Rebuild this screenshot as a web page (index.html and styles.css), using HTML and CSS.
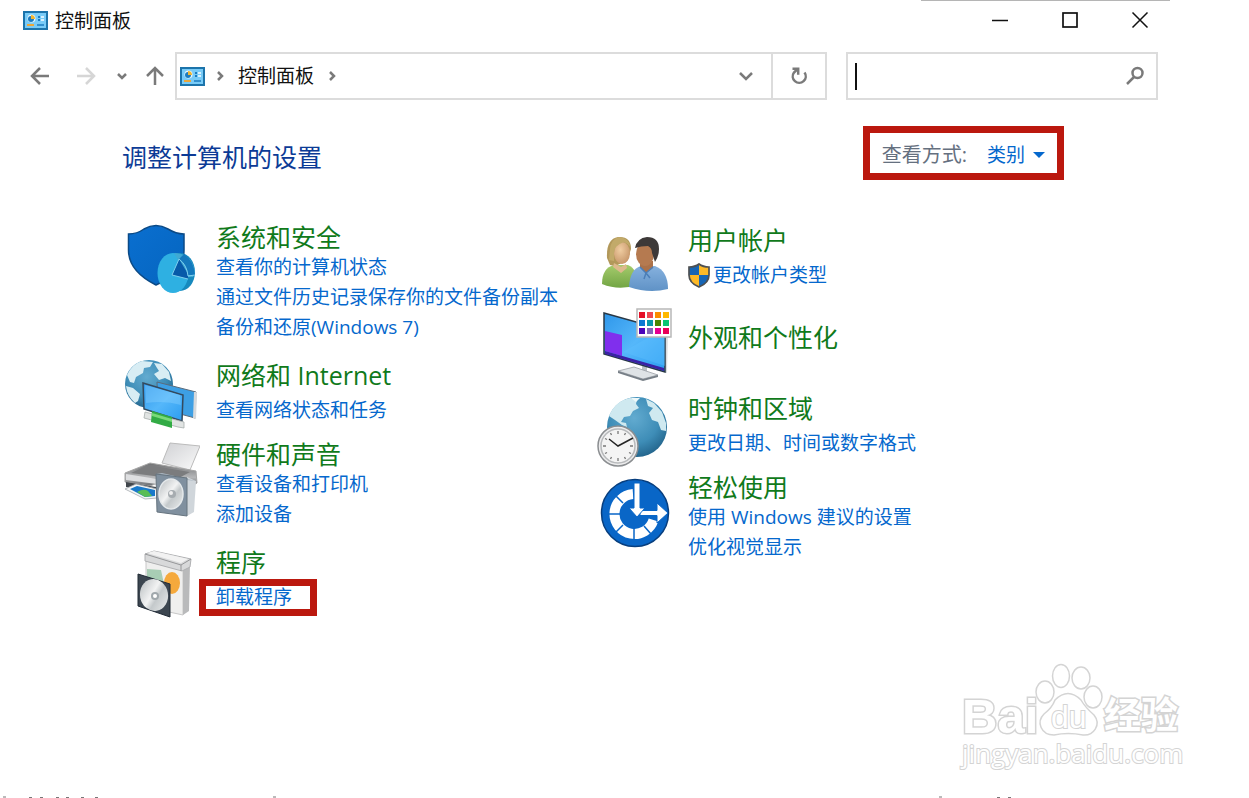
FILE: index.html
```html
<!DOCTYPE html>
<html lang="zh-CN">
<head>
    <meta charset="UTF-8">
    <meta name="viewport" content="width=device-width, initial-scale=1.0">
    <title>控制面板</title>
    <link rel="stylesheet" href="styles.css">
</head>
<body>
    <svg class="defs" width="0" height="0" aria-hidden="true">
        <defs>
            <linearGradient id="gBlue" x1="0" y1="0" x2="1" y2="1"><stop offset="0" stop-color="#0a6fd0"/><stop offset="1" stop-color="#0565bf"/></linearGradient>
            <linearGradient id="gScreen" x1="0" y1="0" x2="1" y2="1"><stop offset="0" stop-color="#2e96ea"/><stop offset="0.5" stop-color="#55b7fa"/><stop offset="1" stop-color="#2b9cf0"/></linearGradient>
            <linearGradient id="gPaper" x1="0" y1="0" x2="1" y2="1"><stop offset="0" stop-color="#d0d1d4"/><stop offset="1" stop-color="#fafafa"/></linearGradient>
            <linearGradient id="gPrinter" x1="0" y1="0" x2="0" y2="1"><stop offset="0" stop-color="#6f7072"/><stop offset="0.6" stop-color="#b6b7b9"/><stop offset="1" stop-color="#5d6064"/></linearGradient>
            <linearGradient id="gDisc" x1="0" y1="0" x2="1" y2="1"><stop offset="0" stop-color="#b5babd"/><stop offset="0.45" stop-color="#f2f3f3"/><stop offset="0.6" stop-color="#c4c9cb"/><stop offset="1" stop-color="#eceeee"/></linearGradient>
            <radialGradient id="gGlobe" cx="0.45" cy="0.35" r="0.7"><stop offset="0" stop-color="#62abd0"/><stop offset="0.6" stop-color="#3e8db7"/><stop offset="1" stop-color="#1f5f86"/></radialGradient>
            <radialGradient id="gFace" cx="0.4" cy="0.35" r="0.8"><stop offset="0" stop-color="#f0cda2"/><stop offset="1" stop-color="#c08d60"/></radialGradient>
            <linearGradient id="gGreen" x1="0" y1="0" x2="0" y2="1"><stop offset="0" stop-color="#a5cb6c"/><stop offset="1" stop-color="#72a544"/></linearGradient>
            <linearGradient id="gShirt" x1="0" y1="0" x2="0" y2="1"><stop offset="0" stop-color="#86b1de"/><stop offset="1" stop-color="#5f92c6"/></linearGradient>
            <symbol id="panel" viewBox="0 0 25 19">
                <rect x="1" y="1" width="23" height="17" fill="#78cbf7" stroke="#1c74ab" stroke-width="2"/>
                <circle cx="8.500" cy="7.500" r="4" fill="#e8f6fd"/>
                <circle cx="8" cy="8" r="3" fill="#1c7cc0"/>
                <path d="M8 8V4a4 4 0 0 1 4 4z" fill="#f2b632"/>
                <path d="M15 5h2v2h-2zM15 8h2v2h-2z" fill="#1c7cc0"/>
                <path d="M18 5h3v2h-3zM18 8h3v2h-3z" fill="#d9f1fd"/>
                <path d="M4 14h7" stroke="#eaa73b" stroke-width="2"/>
                <path d="M14 14h7" stroke="#1c7cc0" stroke-width="1.500"/>
            </symbol>
        </defs>
    </svg>

    <div class="window">
        <header class="titlebar">
            <svg class="panel-icon" aria-hidden="true"><use href="#panel"/></svg>
            <span class="title">控制面板</span>
            <div class="window-buttons">
                <button aria-label="最小化"><svg width="18" height="18"><path d="M1 9.500h16" stroke="#111" stroke-width="1.500"/></svg></button>
                <button aria-label="最大化"><svg width="18" height="18"><rect x="2" y="2" width="14" height="14" fill="none" stroke="#111" stroke-width="1.700"/></svg></button>
                <button aria-label="关闭"><svg width="18" height="18"><path d="M1.500 1.500l15 15M16.500 1.500l-15 15" stroke="#111" stroke-width="1.500"/></svg></button>
            </div>
        </header>

        <div class="toolbar">
            <nav class="nav-buttons">
                <button class="nav-wide" aria-label="后退"><svg width="20" height="18" class="stroke"><path d="M19 9H2M10 1L2 9l8 8"/></svg></button>
                <button class="nav-wide nav-off" aria-label="前进"><svg width="20" height="18" class="stroke"><path d="M1 9h17M10 1l8 8-8 8"/></svg></button>
                <button class="nav-small" aria-label="最近位置"><svg width="10" height="8" class="stroke"><path d="M1 2l4 4 4-4"/></svg></button>
                <button class="nav-up" aria-label="上移"><svg width="18" height="20" class="stroke"><path d="M9 19V2M1 10l8-8 8 8"/></svg></button>
            </nav>
            <div class="address">
                <svg class="panel-icon" aria-hidden="true"><use href="#panel"/></svg>
                <svg width="8" height="10" class="stroke crumb-arrow"><path d="M2 1l4 4-4 4"/></svg>
                <a class="crumb" href="#">控制面板</a>
                <svg width="8" height="10" class="stroke crumb-arrow"><path d="M2 1l4 4-4 4"/></svg>
                <button class="address-drop" aria-label="以前的位置"><svg width="16" height="10" class="stroke"><path d="M2 2l6 6 6-6"/></svg></button>
                <button class="refresh" aria-label="刷新"><svg width="18" height="18" class="stroke"><path d="M14.500 5.500a6.500 6.500 0 1 1-10.500 0l3-3M2.500 1.800h5.700v6"/></svg></button>
            </div>
            <div class="search">
                <span class="caret"></span>
                <input type="text" aria-label="搜索控制面板">
                <button aria-label="搜索"><svg width="20" height="20" class="stroke"><circle cx="12.500" cy="7" r="5"/><path d="M9 11l-7 7"/></svg></button>
            </div>
        </div>

        <main class="content">
            <div class="content-head">
                <h1>调整计算机的设置</h1>
                <div class="view-mode">
                    <label for="view">查看方式:</label>
                    <select id="view">
                        <option>类别</option>
                    </select>
                </div>
            </div>

            <div class="columns">
                <div class="column">
                    <section class="category">
                        <svg class="icon" viewBox="0 0 80 80" aria-hidden="true">
                            <path d="M8.500 12Q17 12 24 7 36 0 48 7 56 12 64 12V28C64 46 52 56 36 63 18 54 8.500 42 8.500 28z" fill="url(#gBlue)" stroke="#0b4a86" stroke-width="1.500"/>
                            <ellipse cx="60" cy="50" rx="15" ry="19" fill="#1689bd"/>
                            <ellipse cx="53" cy="51" rx="15.500" ry="20" fill="#2eb0e2"/>
                            <path d="M54 31q18 0 21 19l-2 5-5 0z" fill="#3fa9d3"/>
                            <path d="M59 37L52 53l16 4V52z" fill="#075aa9"/>
                            <path d="M59 37q8 6 9 16h7q-1-14-11-21z" fill="#1479bd"/>
                            <path d="M59 37L52 53l16 4M59 37q8 6 9 17l7-1" fill="none" stroke="#7fd0ee"/>
                        </svg>
                        <div class="category-body">
                            <h2><a href="#">系统和安全</a></h2>
                            <ul>
                                <li><a href="#">查看你的计算机状态</a></li>
                                <li><a href="#">通过文件历史记录保存你的文件备份副本</a></li>
                                <li><a href="#">备份和还原(Windows 7)</a></li>
                            </ul>
                        </div>
                    </section>

                    <section class="category single">
                        <svg class="icon" viewBox="0 0 80 80" aria-hidden="true">
                            <circle cx="29" cy="24" r="24" fill="url(#gGlobe)"/>
                            <path d="M7 15q5-11 15-14l11 1-3 5-6 1-1 5-7 4-2 6-4-1zM6 26l7 2 7 6-2 7-3 2Q7 36 6 26zM34 3l8 1 7 8 2 9-6-3-6 2-5-6 5-3-2-3z" fill="#d8edf4"/>
                            <path d="M37 22l39 10-1 26-37-10z" fill="#3d9fe4" stroke="#5b6b7b"/>
                            <path d="M76 32l1 1-1 26-3-1 1-26z" fill="#d5d9dc"/>
                            <path d="M23 23l40 12-1 26-38-12z" fill="url(#gScreen)" stroke="#34495d" stroke-width="1.500"/>
                            <path d="M26 43Q45 40 61 45l-1-10-35-10z" fill="#8bd2ff" opacity=".4"/>
                            <path d="M25 52l39 10v6l-6-1-34-9z" fill="#e1e4e3" stroke="#a7adac" stroke-width=".8"/>
                            <path d="M32 51l20 6v11l-21-6z" fill="#32ab45"/>
                            <path d="M32 53l20 6v3l-20-6z" fill="#79da79"/>
                        </svg>
                        <div class="category-body">
                            <h2><a href="#">网络和 Internet</a></h2>
                            <ul>
                                <li><a href="#">查看网络状态和任务</a></li>
                            </ul>
                        </div>
                    </section>

                    <section class="category">
                        <svg class="icon" viewBox="0 0 80 80" aria-hidden="true">
                            <path d="M50 4l30 3-10 24-28-7z" fill="url(#gPaper)" stroke="#bbb"/>
                            <path d="M5 34l25-10 46 8 1 12-7 4-35-3-5 2-25-4z" fill="url(#gPrinter)" stroke="#a6a6a6"/>
                            <path d="M28 26l42 7-13 7-46-6z" fill="#7b7c7e"/>
                            <path d="M6 35l31 5v5L6 41z" fill="#dedfe1"/>
                            <path d="M6 43l30 5v6L6 48z" fill="#42474d"/>
                            <path d="M5 50l11-5 21 5v9l-12 1z" fill="#f4f6f7" stroke="#a5aaae" stroke-width=".8"/>
                            <path d="M10 50l7-3 18 4v6l-10 1z" fill="#1979ca"/>
                            <path d="M17 53q7-4 11-1l4 5-7 1z" fill="#59bd55"/>
                            <path d="M67 38l9 4-2 31-7 4z" fill="#d0d6db"/>
                            <path d="M36 35l6-1 34 8-9-1z" fill="#aab6c1"/>
                            <path d="M36 35l31 4v38l-30-4z" fill="#80909f" stroke="#66747f"/>
                            <ellipse cx="51" cy="55" rx="12" ry="15" fill="url(#gDisc)" stroke="#e5e9eb" stroke-width="1.500"/>
                            <circle cx="52" cy="55" r="4" fill="#a6acb0"/>
                            <circle cx="51" cy="54" r="2" fill="#eee"/>
                        </svg>
                        <div class="category-body">
                            <h2><a href="#">硬件和声音</a></h2>
                            <ul>
                                <li><a href="#">查看设备和打印机</a></li>
                                <li><a href="#">添加设备</a></li>
                            </ul>
                        </div>
                    </section>

                    <section class="category single">
                        <svg class="icon" viewBox="0 4 80 80" aria-hidden="true">
                            <path d="M26 18l37 9v45l-37-8z" fill="#efefee" stroke="#c8c8c8"/>
                            <path d="M63 27l7-6-1 47-6 4z" fill="#b9babb"/>
                            <path d="M27 26l14 1 3 14-17-3z" fill="#a8cdb4"/>
                            <ellipse cx="52" cy="40" rx="8" ry="11" fill="#f5a93c"/>
                            <path d="M25 11l9-3 37 8-1 8-8 4-37-10z" fill="#d8d9da" stroke="#b0b1b3"/>
                            <path d="M25 11l36 11 10-6M61 22v6" fill="none" stroke="#969799"/>
                            <path d="M27 10l7-2 34 8-7 4z" fill="#f2f2f2"/>
                            <path d="M18 31l32 10v33l-32-11z" fill="#3c4650" stroke="#202a35"/>
                            <ellipse cx="34" cy="52" rx="14" ry="16" transform="rotate(-10 34 52)" fill="url(#gDisc)"/>
                            <circle cx="35" cy="53" r="4" fill="#a0a8ac"/>
                            <circle cx="35" cy="53" r="2" fill="#fff"/>
                        </svg>
                        <div class="category-body">
                            <h2><a href="#">程序</a></h2>
                            <ul>
                                <li><a class="marked" href="#">卸载程序</a></li>
                            </ul>
                        </div>
                    </section>
                </div>

                <div class="column column-right">
                    <section class="category single">
                        <svg class="icon" viewBox="0 0 80 80" aria-hidden="true">
                            <path d="M10 59q0-16 12-19h14q10 4 9 20-18 6-35-1z" fill="url(#gGreen)"/>
                            <path d="M15 33q-1-19 11-21 13-1 13 12l-4 12-12 5-5-1z" fill="#b2985a"/>
                            <ellipse cx="30" cy="28" rx="8" ry="11" fill="url(#gFace)"/>
                            <path d="M22 29q0-9 10-12 7 3 7 8-1-12-12-13-8 2-9 12l-1 11 5 1z" fill="#c2aa6a"/>
                            <path d="M22 38l7 4 5-3 1 4-6 5-8-6z" fill="#ddb98c"/>
                            <path d="M37 62q1-18 12-21h14q13 5 13 23-19 5-39-2z" fill="url(#gShirt)"/>
                            <path d="M48 36h13v7l-7 5-6-6z" fill="#ab7149"/>
                            <ellipse cx="53" cy="29" rx="9" ry="12" fill="#b57a50"/>
                            <path d="M43 23q2-10 12-11 12 0 12 12 0 7-4 13l-3-9q0-5-4-7-7 0-13 2z" fill="#3d3938"/>
                            <path d="M48 42l6 6-2 6M61 42l-7 6 4 5" fill="none" stroke="#4b7eb7" stroke-width="1.500"/>
                        </svg>
                        <div class="category-body">
                            <h2><a href="#">用户帐户</a></h2>
                            <ul>
                                <li>
                                    <a class="with-shield" href="#">
                                        <svg width="22" height="25" viewBox="0 0 22 25" aria-hidden="true">
                                            <path d="M1 4q6 0 10-3 4 3 10 3v8q0 8-10 12Q1 20 1 12z" fill="#fdb927"/>
                                            <path d="M1 4q6 0 10-3v11H1zM11 12h10q0 8-10 12z" fill="#1765b5"/>
                                            <path d="M1 4q6 0 10-3 4 3 10 3v8q0 8-10 12Q1 20 1 12z" fill="none" stroke="#4e5052" stroke-width="1.700"/>
                                        </svg>
                                        更改帐户类型
                                    </a>
                                </li>
                            </ul>
                        </div>
                    </section>

                    <section class="category title-only">
                        <svg class="icon" viewBox="0 0 80 80" aria-hidden="true">
                            <path d="M50 58l5 1v14h-5z" fill="#bbc0c6"/>
                            <path d="M26 67l16-4 24 8-15 4z" fill="#dfe3e6" stroke="#9aa0a6" stroke-width=".8"/>
                            <path d="M26 67v2l25 8 15-4v-2l-15 4z" fill="#777f87"/>
                            <path d="M72 26l4 1-1 42-3-1z" fill="#dadde0"/>
                            <path d="M12 9l61 17v42L12 50z" fill="url(#gScreen)" stroke="#293846" stroke-width="1.500"/>
                            <path d="M31 48L73 24v38z" fill="#5fc0ff" opacity=".4"/>
                            <path d="M13 27l17 4v21l-17-5z" fill="#802fed"/>
                            <path d="M13 47l59 17v3L13 50z" fill="#3b21a5"/>
                            <path d="M45 5h34v28H45z" fill="#fff" stroke="#b8b8b8" stroke-width="1.500"/>
                            <g>
                                <path d="M47 8h6v6h-6z" fill="#e50f27"/><path d="M55 8h6v6h-6z" fill="#ee4852"/><path d="M63 8h6v6h-6z" fill="#fb8c00"/><path d="M71 8h6v6h-6z" fill="#ffb900"/>
                                <path d="M47 16h6v6h-6z" fill="#0b78d3"/><path d="M55 16h6v6h-6z" fill="#0797aa"/><path d="M63 16h6v6h-6z" fill="#4a8502"/><path d="M71 16h6v6h-6z" fill="#07c673"/>
                                <path d="M47 24h6v6h-6z" fill="#4b05b9"/><path d="M55 24h6v6h-6z" fill="#8665b9"/><path d="M63 24h6v6h-6z" fill="#e60090"/><path d="M71 24h6v6h-6z" fill="#e80057"/>
                            </g>
                        </svg>
                        <div class="category-body">
                            <h2><a href="#">外观和个性化</a></h2>
                        </div>
                    </section>

                    <section class="category single">
                        <svg class="icon" viewBox="0 0 80 80" aria-hidden="true">
                            <circle cx="45" cy="34" r="30" fill="url(#gGlobe)"/>
                            <path d="M17 23Q23 8 38 5l7 1-1 5 3 4-6 3-3 5-6 1-3 5 5 1 1 4-5-2-7-5zM54 6l8 4 8 9 4 11v8l-5-1-3-8-6-2-3-7 4-5-5-2z" fill="#cfe9f0"/>
                            <path d="M39 5l5 4 4-4z" fill="#eef9fa"/>
                            <circle cx="26" cy="53" r="20" fill="#ececed" stroke="#8b8e91" stroke-width="1.500"/>
                            <circle cx="26" cy="53" r="17" fill="#f4f4f4" stroke="#b8babc" stroke-width="1.500"/>
                            <path d="M26 38v3M26 65v3M11 53h3M38 53h3M18.500 40l1 2M33.500 40l-1 2M13 45.500l2 1M39 60.500l-2-1M13 60.500l2-1M18.500 66l1-2M33.500 66l-1-2" stroke="#777" stroke-width="1.300"/>
                            <path d="M17 46l9 7 15-8" fill="none" stroke="#252525" stroke-width="1.500"/>
                        </svg>
                        <div class="category-body">
                            <h2><a href="#">时钟和区域</a></h2>
                            <ul>
                                <li><a href="#">更改日期、时间或数字格式</a></li>
                            </ul>
                        </div>
                    </section>

                    <section class="category">
                        <svg class="icon" viewBox="0 0 80 80" aria-hidden="true">
                            <circle cx="43" cy="41" r="33.500" fill="#0966c7" stroke="#073e7e" stroke-width="1.500"/>
                            <path d="M41 22A20 20 0 1 0 61.500 48" fill="none" stroke="#fff" stroke-width="10"/>
                            <path d="M31 31l-9-9M28 42H16M31 53l-8 8M42 57v11M52 54l7 8" stroke="#0966c7" stroke-width="1.500"/>
                            <path d="M48 38.500h17v-7.500l11 10-11 10v-7.500H48z" fill="#fff" stroke="#0966c7"/>
                            <path d="M42 11h6v25h5L45 45 37 36h5z" fill="#fff" stroke="#0966c7"/>
                        </svg>
                        <div class="category-body">
                            <h2><a href="#">轻松使用</a></h2>
                            <ul>
                                <li><a href="#">使用 Windows 建议的设置</a></li>
                                <li><a href="#">优化视觉显示</a></li>
                            </ul>
                        </div>
                    </section>
                </div>
            </div>
        </main>
    </div>

    <svg class="watermark" width="232" height="116" viewBox="0 0 232 116">
        <g class="watermark-shape">
            <text x="9" y="78" class="wm-latin">Bai</text>
            <ellipse cx="92" cy="37" rx="9" ry="11"/>
            <ellipse cx="108" cy="21" rx="8.500" ry="11.500"/>
            <ellipse cx="128" cy="23" rx="9" ry="11"/>
            <ellipse cx="140" cy="42" rx="9" ry="11"/>
            <path d="M102 45q13-13 26 0 4 7 13 15c8 10-1 21-11 20q-15-3-29 0c-13 0-18-13-10-21q8-6 11-14z"/>
            <text x="98" y="73" class="wm-du">du</text>
            <text x="151" y="74" class="wm-cjk">经验</text>
            <text x="9" y="108" class="wm-url">jingyan.baidu.com</text>
        </g>
    </svg>

    <div class="page-edge" aria-hidden="true">
        <svg width="280" height="3"><path d="M3 2h3M29 2.500h3M40 2.500h3M56 2.500h3M66 2.500h3M81 2.500h3M95 2.500h3M273 2h3" stroke="#777" stroke-width="1"/></svg>
        <svg width="311" height="3"><path d="M1 2h3M59 2.500h3M70 2.500h3" stroke="#777" stroke-width="1"/></svg>
    </div>
</body>
</html>
```

FILE: styles.css
```css
* {
    box-sizing: border-box;
}
body {
    font-family: "Open Sans", "Noto Sans CJK SC", sans-serif;
    font-size: 19px;
    background-color: #fff;
    color: #111;
    margin: 0;
    min-height: 100vh;
    display: flex;
    flex-direction: column;
    position: relative;
}
.defs {
    position: absolute;
}
button {
    display: flex;
    justify-content: center;
    align-items: center;
    padding: 0;
    border: none;
    background: none;
    cursor: pointer;
}
a {
    color: #0568cd;
    text-decoration: none;
}
a:hover {
    text-decoration: underline;
}
.window {
    margin-right: 79px;
}
.stroke {
    fill: none;
    stroke: #7a7a7a;
    stroke-width: 2.5;
}
.panel-icon {
    width: 25px;
    height: 19px;
    flex: none;
}

/* title bar */
.titlebar {
    display: flex;
    align-items: center;
    height: 40px;
    padding: 0 7px 0 23px;
    background: linear-gradient(#b5b5b5, #b5b5b5) right top / 249px 1px no-repeat;
}
.title {
    margin-left: 7px;
}
.window-buttons {
    display: flex;
    gap: 24px;
    margin-left: auto;
}
.window-buttons button {
    width: 46px;
    height: 38px;
}

/* toolbar */
.toolbar {
    display: flex;
    height: 48px;
    margin-top: 12px;
    padding: 0 12px 0 17px;
}
.nav-buttons {
    display: flex;
    flex: none;
}
.nav-wide {
    width: 46px;
}
.nav-off {
    opacity: 0.3;
}
.nav-small {
    width: 26px;
}
.nav-up {
    width: 40px;
}
.address, .search {
    display: flex;
    align-items: center;
    min-width: 0;
    border: 2px solid #dcdcdc;
}
.address {
    flex: 2.22 1 0;
    padding-left: 3px;
}
.crumb-arrow {
    flex: none;
    margin: 0 11px;
}
.crumb {
    color: #111;
    line-height: 28px;
    padding: 0 3px;
}
.address-drop {
    width: 50px;
    height: 44px;
    margin-left: auto;
}
.refresh {
    width: 54px;
    height: 44px;
    border-left: 2px solid #dcdcdc;
}
.search {
    flex: 1 1 0;
    margin-left: 19px;
    padding: 0 11px 0 7px;
}
.caret {
    width: 2px;
    height: 27px;
    background: #111;
}
.search input {
    flex: 1;
    min-width: 0;
    height: 30px;
    border: none;
    outline: none;
    font: inherit;
}

/* content */
.content {
    padding: 26px 106px 0 120px;
}
.content-head {
    display: flex;
    align-items: center;
    justify-content: space-between;
}
h1 {
    margin: 8px 0 0 2px;
    font-size: 25px;
    font-weight: normal;
    line-height: 30px;
    color: #0c3b96;
}
.view-mode {
    display: flex;
    align-items: center;
    height: 54px;
    padding: 4px 12px 0;
    border: 7px solid #bb180e;
}
.view-mode label {
    font-size: 20px;
    line-height: 28px;
    color: #65707f;
}
.view-mode select {
    appearance: none;
    width: 58px;
    height: 28px;
    margin-left: 20px;
    padding: 0;
    border: none;
    font: inherit;
    color: #0568cd;
    background: url("data:image/svg+xml,%3Csvg xmlns='http://www.w3.org/2000/svg' width='12' height='6'%3E%3Cpath d='M0 0h12l-6 6z' fill='%230568cd'/%3E%3C/svg%3E") right center no-repeat;
}
.columns {
    display: grid;
    grid-template-columns: 1fr 1fr;
    margin-top: 42px;
}
.column {
    display: flex;
    flex-direction: column;
    gap: 14px;
}
.column-right {
    padding-top: 3px;
}
.category {
    display: flex;
    align-items: flex-start;
    gap: 16px;
    margin-bottom: 4px;
}
.single, .title-only {
    margin-bottom: 0;
}
.single ul {
    padding-top: 5px;
}
.title-only {
    height: 75px;
}
.title-only .category-body {
    padding-top: 18px;
}
.icon {
    flex: none;
    width: 80px;
    height: 80px;
    margin-bottom: -16px;
}
h2 {
    margin: 0;
    font-size: 25px;
    font-weight: normal;
    line-height: 30px;
}
h2 a {
    color: #107a1b;
}
ul {
    list-style: none;
    margin: 0;
    padding: 0;
}
li {
    line-height: 30px;
    white-space: nowrap;
}
.with-shield {
    display: flex;
    align-items: center;
    gap: 3px;
}
.marked {
    display: block;
    width: max-content;
    margin: -3px 0 0 -17px;
    padding: 0 18px 0 10px;
    border: 7px solid #bb180e;
    line-height: 23px;
}

/* watermark over the lower right corner */
.watermark {
    position: absolute;
    right: 64px;
    bottom: 27px;
}
.watermark-shape {
    fill: #fff;
    stroke: #d4d4d4;
    stroke-width: 1.5;
}
.watermark-shape text {
    paint-order: stroke;
    stroke-width: 3;
}
.wm-latin {
    font: bold 49px "Liberation Sans", sans-serif;
}
.watermark-shape .wm-du {
    font: 32px "Liberation Sans", sans-serif;
    stroke-width: 2;
}
.wm-cjk {
    font: bold 37px "Noto Sans CJK SC", sans-serif;
}
.watermark-shape .wm-url {
    font: 26px "Open Sans", sans-serif;
    stroke-width: 2;
}
.page-edge {
    display: flex;
    justify-content: space-between;
    height: 3px;
    margin-top: auto;
}
```
